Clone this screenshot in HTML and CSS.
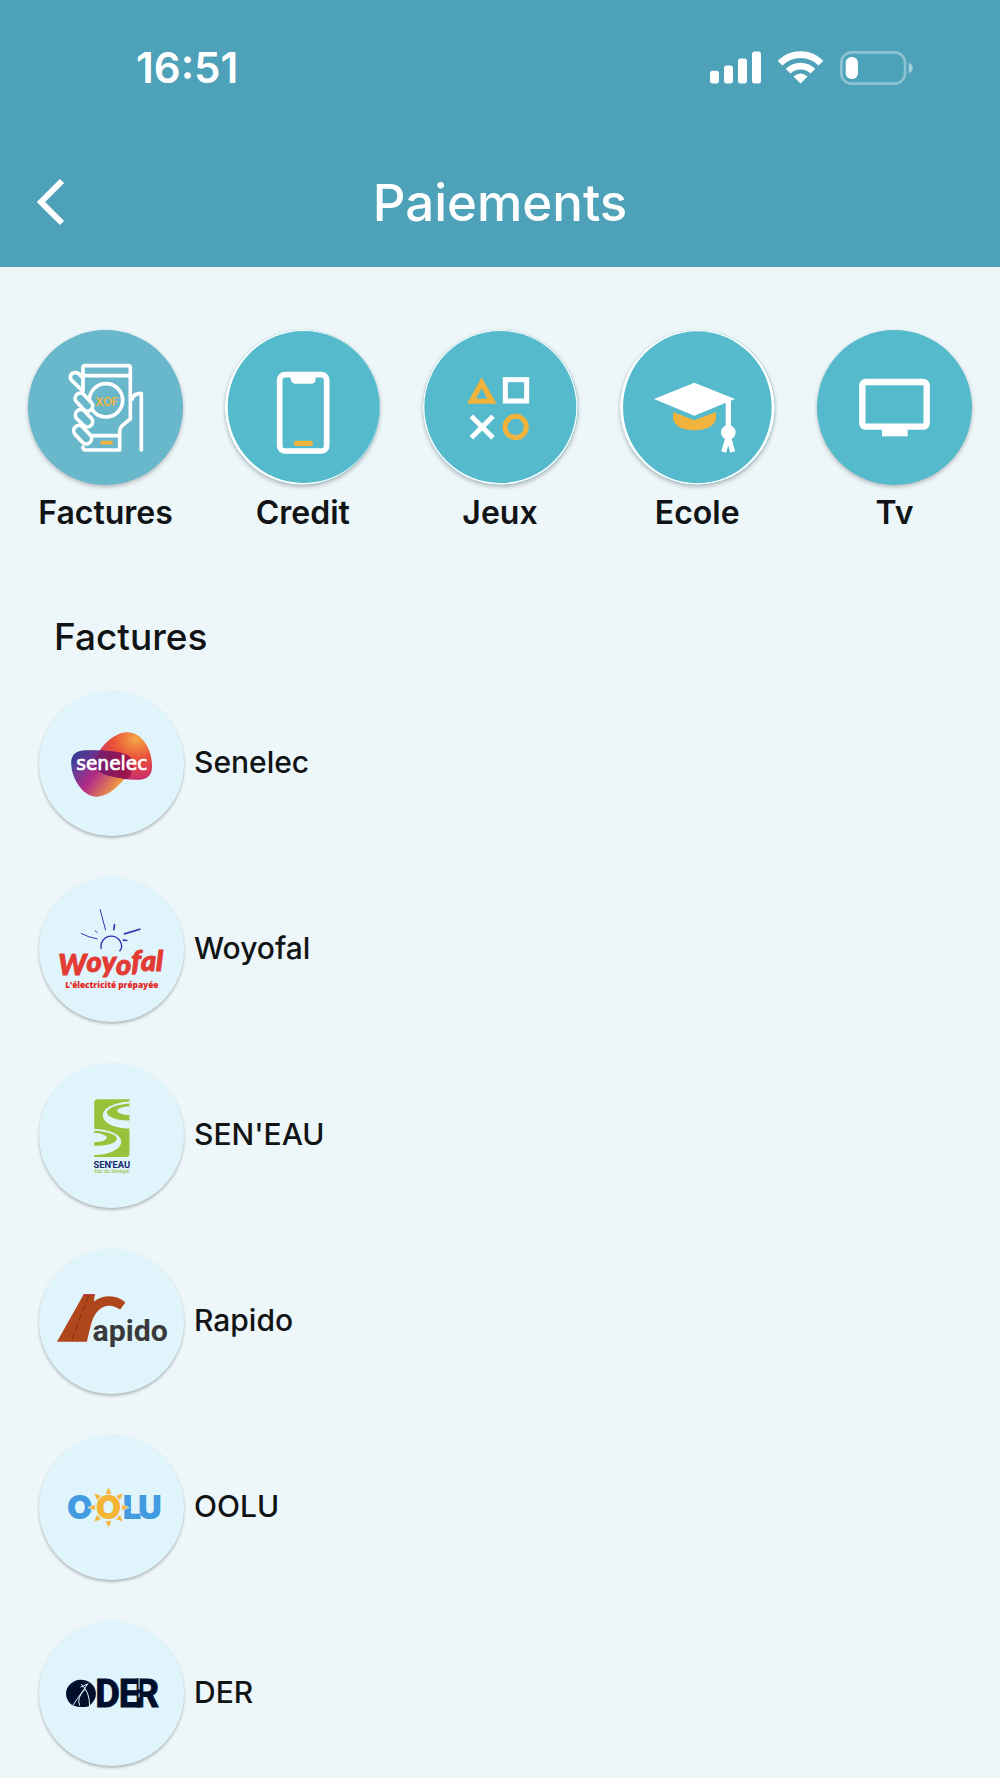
FILE: index.html
```html
<!DOCTYPE html>
<html lang="fr">
<head>
    <meta charset="UTF-8">
    <meta name="viewport" content="width=device-width, initial-scale=1.0">
    <title>Paiements</title>
    <link rel="stylesheet" href="styles.css">
</head>
<body>
    <header class="header">
        <div class="status-bar">
            <span class="time">16:51</span>
            <div class="status-icons">
                <svg width="51" height="33" viewBox="0 0 153 98" fill="#fff" aria-hidden="true">
                    <rect x="0" y="59" width="27" height="38" rx="8"/>
                    <rect x="42" y="43" width="27" height="54" rx="8"/>
                    <rect x="84" y="22" width="27" height="75" rx="8"/>
                    <rect x="126" y="1" width="27" height="96" rx="8"/>
                </svg>
                <svg width="45" height="33" viewBox="0 0 134 98" fill="none" stroke="#fff" stroke-width="20" aria-hidden="true">
                    <path d="M6 36A86 86 0 0 1 128 36"/>
                    <path d="M30 60A53 53 0 0 1 104 60"/>
                    <path d="M67 97L46 76Q67 58 88 76Z" fill="#fff" stroke="none"/>
                </svg>
                <svg width="73" height="34" viewBox="0 0 219 102" aria-hidden="true">
                    <rect x="4" y="4" width="191" height="94" rx="31" fill="none" stroke="#fff" stroke-opacity=".36" stroke-width="8"/>
                    <rect x="17" y="18" width="37" height="66" rx="17" fill="#fff"/>
                    <path d="M206 35Q218 39 218 51T206 67Z" fill="#fff" fill-opacity=".5"/>
                </svg>
            </div>
        </div>
        <nav class="nav-bar">
            <button class="back" type="button" aria-label="Retour">
                <svg width="28" height="48" viewBox="0 0 28 48" fill="none" stroke="#fff" stroke-width="6" aria-hidden="true">
                    <path d="M25 3L4 24L25 45"/>
                </svg>
            </button>
            <h1>Paiements</h1>
        </nav>
    </header>

    <main>
        <div class="categories">
            <a class="category active" href="#factures">
                <span class="category-icon">
                    <svg viewBox="0 0 465 465" fill="none" stroke="#fff" stroke-width="11" stroke-linejoin="round" stroke-linecap="round" aria-hidden="true">
                        <path d="M165 184V113Q165 107 171 107H301Q307 107 307 113V267L286 284Q275 293 275 305V360H172Q165 360 165 351M165 137H307M192 317H275"/>
                        <path d="M312 208Q316 190 340 190V360"/>
                        <circle cx="234" cy="211" r="50"/>
                        <path d="M161 180L131 151C121 139 131 128 142 128Q154 128 160 140"/>
                        <g fill="#68b7ca">
                            <rect x="137" y="201" width="62" height="31" rx="15" transform="rotate(47 168 216)"/>
                            <rect x="138" y="249" width="60" height="32" rx="16" transform="rotate(45 168 265)"/>
                            <rect x="132" y="298" width="64" height="32" rx="16" transform="rotate(47 164 314)"/>
                        </g>
                        <path d="M222 338H250" stroke="#f2b33d"/>
                        <text class="coin" x="237" y="227" text-anchor="middle">XOF</text>
                    </svg>
                </span>
                <span class="category-name">Factures</span>
            </a>
            <a class="category" href="#credit">
                <span class="category-icon">
                    <svg viewBox="0 0 465 465" aria-hidden="true">
                        <circle cx="232" cy="232" r="232" fill="#fff"/>
                        <circle cx="236" cy="231" r="228" fill="#55bacc"/>
                        <rect x="164" y="134" width="141" height="229" rx="16" fill="none" stroke="#fff" stroke-width="17"/>
                        <path d="M197 136H272V148Q270 161 260 161H210Q200 161 197 148Z" fill="#fff"/>
                        <path d="M214 340H256" stroke="#f2b33d" stroke-width="16" stroke-linecap="round"/>
                    </svg>
                </span>
                <span class="category-name">Credit</span>
            </a>
            <a class="category" href="#jeux">
                <span class="category-icon">
                    <svg viewBox="0 0 465 465" aria-hidden="true">
                        <circle cx="232" cy="232" r="232" fill="#fff"/>
                        <circle cx="232" cy="231" r="228" fill="#55bacc"/>
                        <path d="M176 142L221 221H132ZM176 175L159 206H193Z" fill="#f2b33d" fill-rule="evenodd"/>
                        <g fill="none" stroke="#fff" stroke-width="15">
                            <rect x="247" y="149" width="64" height="64"/>
                            <path d="M145 259L210 323M210 259L145 323"/>
                        </g>
                        <circle cx="278" cy="291" r="32" fill="none" stroke="#f2b33d" stroke-width="15"/>
                    </svg>
                </span>
                <span class="category-name">Jeux</span>
            </a>
            <a class="category" href="#ecole">
                <span class="category-icon">
                    <svg viewBox="0 0 465 465" aria-hidden="true">
                        <circle cx="232" cy="232" r="232" fill="#fff"/>
                        <ellipse cx="232" cy="232" rx="223" ry="228" fill="#55bacc"/>
                        <path d="M102 207L223 158L345 207L223 257Z" fill="#fff"/>
                        <path d="M159 246L223 271L288 246V268Q276 301 223 301T159 268Z" fill="#f2b33d"/>
                        <path d="M325 210V300" stroke="#fff" stroke-width="16"/>
                        <circle cx="325" cy="307" r="22" fill="#fff"/>
                        <path d="M324 322L311 366M326 322L338 366" stroke="#fff" stroke-width="15"/>
                    </svg>
                </span>
                <span class="category-name">Ecole</span>
            </a>
            <a class="category" href="#tv">
                <span class="category-icon">
                    <svg viewBox="0 0 465 465" aria-hidden="true">
                        <rect x="136" y="156" width="193" height="134" rx="10" fill="none" stroke="#fff" stroke-width="19"/>
                        <path d="M195 291H272V319H195Z" fill="#fff"/>
                    </svg>
                </span>
                <span class="category-name">Tv</span>
            </a>
        </div>

        <section class="billers" id="factures">
            <h2>Factures</h2>
            <ul class="biller-list">
                <li>
                    <a class="biller" href="#senelec">
                        <span class="logo">
                            <svg viewBox="0 0 436 436" aria-hidden="true">
                                <defs>
                                    <radialGradient id="warm" cx=".72" cy=".15" r=".9">
                                        <stop offset="0" stop-color="#f4a847"/>
                                        <stop offset=".45" stop-color="#ea5139"/>
                                        <stop offset="1" stop-color="#c92a72"/>
                                    </radialGradient>
                                    <linearGradient id="cool" x1="0" y1=".2" x2=".9" y2=".7">
                                        <stop offset="0" stop-color="#3b48a0"/>
                                        <stop offset=".48" stop-color="#b32b86"/>
                                        <stop offset=".95" stop-color="#f2a03f"/>
                                    </linearGradient>
                                    <linearGradient id="mix">
                                        <stop offset="0" stop-color="#6f2274"/>
                                        <stop offset=".5" stop-color="#99154f"/>
                                        <stop offset="1" stop-color="#c32a3b"/>
                                    </linearGradient>
                                    <clipPath id="band">
                                        <path d="M97 218C97 180 125 178 150 178C200 178 264 182 276 200C290 225 275 268 262 266C200 255 180 250 150 234Z"/>
                                    </clipPath>
                                </defs>
                                <path d="M265 124C310 124 340 175 340 228C340 262 315 268 290 267C240 265 190 255 172 235C150 200 215 124 265 124Z" fill="url(#warm)"/>
                                <path d="M97 218C97 180 125 178 150 178C200 178 256 182 274 198C290 220 262 265 235 287C210 312 185 318 170 318C130 315 97 260 97 218Z" fill="url(#cool)"/>
                                <path d="M97 218C97 180 125 178 150 178C200 178 255 182 272 199C220 225 180 225 97 218Z" fill="#3b2783" fill-opacity=".35"/>
                                <path d="M265 124C310 124 340 175 340 228C340 262 315 268 290 267C240 265 190 255 172 235C150 200 215 124 265 124Z" fill="url(#mix)" clip-path="url(#band)"/>
                                <text class="senelec" x="219" y="238" text-anchor="middle">senelec</text>
                            </svg>
                        </span>
                        <span class="biller-name">Senelec</span>
                    </a>
                </li>
                <li>
                    <a class="biller" href="#woyofal">
                        <span class="logo">
                            <svg viewBox="0 0 436 436" aria-hidden="true">
                                <g fill="none" stroke="#3a2fb0" stroke-linecap="round">
                                    <path d="M187 215A31 31 0 1 1 248 214L243 222" stroke-width="4"/>
                                    <path d="M184 98L200 159M127 170Q150 182 175 186M169 162L175 167" stroke-width="3"/>
                                    <path d="M227 143L225 158M257 171L303 157M254 190L264 191" stroke-width="5"/>
                                </g>
                                <text class="woyofal" x="58" y="294">W<tspan dy="-8">o</tspan>y<tspan dy="10">o</tspan><tspan dy="-12">f</tspan>al</text>
                                <text class="woyofal-tag" x="219" y="335" text-anchor="middle">L’électricité prépayée</text>
                            </svg>
                        </span>
                        <span class="biller-name">Woyofal</span>
                    </a>
                </li>
                <li>
                    <a class="biller" href="#seneau">
                        <span class="logo">
                            <svg viewBox="0 0 436 436" aria-hidden="true">
                                <path d="M178 109H272V271Q272 283 260 283H166V121Q166 109 178 109Z" fill="#97c33a"/>
                                <path d="M273 116C222 119 192 138 192 157C192 182 232 198 273 197Z" fill="#dff4fb"/>
                                <path d="M272 122C232 124 204 138 204 149C204 164 240 174 272 173Z" fill="#97c33a"/>
                                <path d="M273 130C252 131 235 137 235 143C235 151 255 157 273 157Z" fill="#dff4fb"/>
                                <path d="M165 198C212 200 247 216 247 237C247 262 206 277 165 277Z" fill="#dff4fb"/>
                                <path d="M166 204C206 206 234 216 234 227C234 242 200 250 166 249Z" fill="#97c33a"/>
                                <path d="M165 210C186 211 204 218 204 224C204 233 184 238 165 238Z" fill="#dff4fb"/>
                                <text class="seneau" x="219" y="316" text-anchor="middle">SEN'EAU</text>
                                <text class="seneau-tag" x="219" y="330" text-anchor="middle">Eau du Sénégal</text>
                            </svg>
                        </span>
                        <span class="biller-name">SEN'EAU</span>
                    </a>
                </li>
                <li>
                    <a class="biller" href="#rapido">
                        <span class="logo">
                            <svg viewBox="0 0 436 436" aria-hidden="true">
                                <path d="M134 137H168L165 158C195 135 235 138 260 161L244 182C205 155 170 178 158 222Q150 250 144 279H54Z" fill="#b0461c"/>
                                <path d="M134 138H168" stroke="#b3262b" stroke-width="4"/>
                                <path d="M149 141L96 279" stroke="#7a2f17" stroke-width="3" stroke-dasharray="20 10"/>
                                <text class="rapido" x="161" y="277">apido</text>
                            </svg>
                        </span>
                        <span class="biller-name">Rapido</span>
                    </a>
                </li>
                <li>
                    <a class="biller" href="#oolu">
                        <span class="logo">
                            <svg viewBox="0 0 436 436" aria-hidden="true">
                                <text class="oolu" x="84" y="254">O</text>
                                <text class="oolu" x="252 298" y="254">LU</text>
                                <circle cx="209" cy="218" r="42" fill="#dff4fb"/>
                                <g fill="#f6b436" stroke="#dff4fb" stroke-width="2">
                                    <path id="ray" d="M209 156L219 178H199Z"/>
                                    <use href="#ray" transform="rotate(45 209 218)"/>
                                    <use href="#ray" transform="rotate(90 209 218)"/>
                                    <use href="#ray" transform="rotate(135 209 218)"/>
                                    <use href="#ray" transform="rotate(180 209 218)"/>
                                    <use href="#ray" transform="rotate(225 209 218)"/>
                                    <use href="#ray" transform="rotate(270 209 218)"/>
                                    <use href="#ray" transform="rotate(315 209 218)"/>
                                </g>
                                <text class="oolu sun" x="209" y="254" text-anchor="middle">O</text>
                            </svg>
                        </span>
                        <span class="biller-name">OOLU</span>
                    </a>
                </li>
                <li>
                    <a class="biller" href="#der">
                        <span class="logo">
                            <svg viewBox="0 0 436 436" aria-hidden="true">
                                <path d="M102 254A45 42 0 1 1 156 250L150 256Q126 262 102 254Z" fill="#020f2c"/>
                                <path d="M148 187L100 256M127 190Q154 214 152 260M140 204Q112 230 122 254M125 199L145 190" fill="none" stroke="#dff4fb" stroke-width="3"/>
                                <text class="der" x="169 240 288" y="258">DER</text>
                                <path d="M301 172V206M301 218V230" stroke="#dff4fb" stroke-width="3"/>
                            </svg>
                        </span>
                        <span class="biller-name">DER</span>
                    </a>
                </li>
            </ul>
        </section>
    </main>
</body>
</html>
```
FILE: styles.css
```css
:root {
    --header-color: #4da1b8;
    --circle-color: #55bacc;
    --active-color: #68b7ca;
    --logo-color: #dff4fb;
    --accent-color: #f2b33d;
    --text-color: #111414;
    --background-color: #edf6f9;
}

* {
    margin: 0;
    padding: 0;
    box-sizing: border-box;
}

body {
    min-height: 100vh;
    font-family: Inter, "Liberation Sans", sans-serif;
    font-weight: 500;
    color: var(--text-color);
    background-color: var(--background-color);
}

a {
    color: inherit;
    text-decoration: none;
}

svg {
    display: block;
}

/* Header */
.header {
    color: white;
    background-color: var(--header-color);
}

.status-bar {
    display: flex;
    justify-content: space-between;
    align-items: center;
    height: 135px;
    padding: 0 87px 0 136px;
}

.time {
    font-size: 42px;
    font-weight: 600;
}

.status-icons {
    display: flex;
    align-items: center;
    gap: 17px;
}

.nav-bar {
    display: grid;
    grid-template-columns: 1fr auto 1fr;
    align-items: center;
    height: 132px;
    padding: 2px 37px 0;
}

.back {
    justify-self: start;
    background: none;
    border: none;
    cursor: pointer;
}

h1 {
    font-size: 51px;
    font-weight: 500;
}

/* Categories */
.categories {
    display: flex;
    justify-content: space-between;
    padding: 63px 28px 0;
}

.category {
    display: flex;
    flex-direction: column;
    align-items: center;
    gap: 8px;
}

.category-icon {
    width: 155px;
    height: 155px;
    border-radius: 50%;
    background-color: var(--circle-color);
    box-shadow: 0 2px 4px rgba(0, 0, 0, 0.25);
}

.active .category-icon {
    background-color: var(--active-color);
}

.category-name {
    font-size: 32px;
    font-weight: 600;
    line-height: 40px;
}

/* Billers */
.billers {
    padding: 80px 39px 11px;
}

h2 {
    padding: 0 15px;
    font-size: 37px;
    line-height: 48px;
    font-weight: 500;
}

.biller-list {
    display: flex;
    flex-direction: column;
    gap: 41px;
    padding-top: 30px;
    list-style: none;
}

.biller {
    display: flex;
    align-items: center;
    gap: 10px;
}

.biller-name {
    padding-bottom: 4px;
    font-size: 30px;
}

.logo {
    width: 145px;
    height: 145px;
    border-radius: 50%;
    background-color: var(--logo-color);
    box-shadow: 0 2px 3px rgba(0, 0, 0, 0.25);
}

/* Text inside the logos */
.coin {
    font-size: 34px;
    font-weight: 600;
    fill: var(--accent-color);
    stroke: none;
}

.senelec {
    font-family: "DejaVu Sans", sans-serif;
    font-size: 56px;
    font-weight: 400;
    fill: white;
    stroke: white;
    stroke-width: 2px;
}

.woyofal {
    font-family: Lato, sans-serif;
    font-size: 87px;
    font-weight: 900;
    font-style: italic;
    fill: #e33b33;
    stroke: #e33b33;
    stroke-width: 3px;
}

.woyofal-tag {
    font-family: "Open Sans", sans-serif;
    font-size: 25px;
    font-weight: 800;
    fill: #e5261f;
}

.seneau {
    font-family: Roboto, sans-serif;
    font-size: 28px;
    font-weight: 700;
    fill: #14296b;
}

.seneau-tag {
    font-size: 14px;
    fill: #97c33a;
}

.rapido {
    font-family: Roboto, sans-serif;
    font-size: 91px;
    font-weight: 700;
    fill: #3a3a3c;
}

.oolu {
    font-family: Inter, sans-serif;
    font-size: 99px;
    font-weight: 900;
    fill: #429be0;
}

.sun {
    fill: #f6b436;
}

.der {
    font-family: Roboto, sans-serif;
    font-size: 114px;
    font-weight: 700;
    fill: #020f2c;
    stroke: #020f2c;
    stroke-width: 3px;
}
```
